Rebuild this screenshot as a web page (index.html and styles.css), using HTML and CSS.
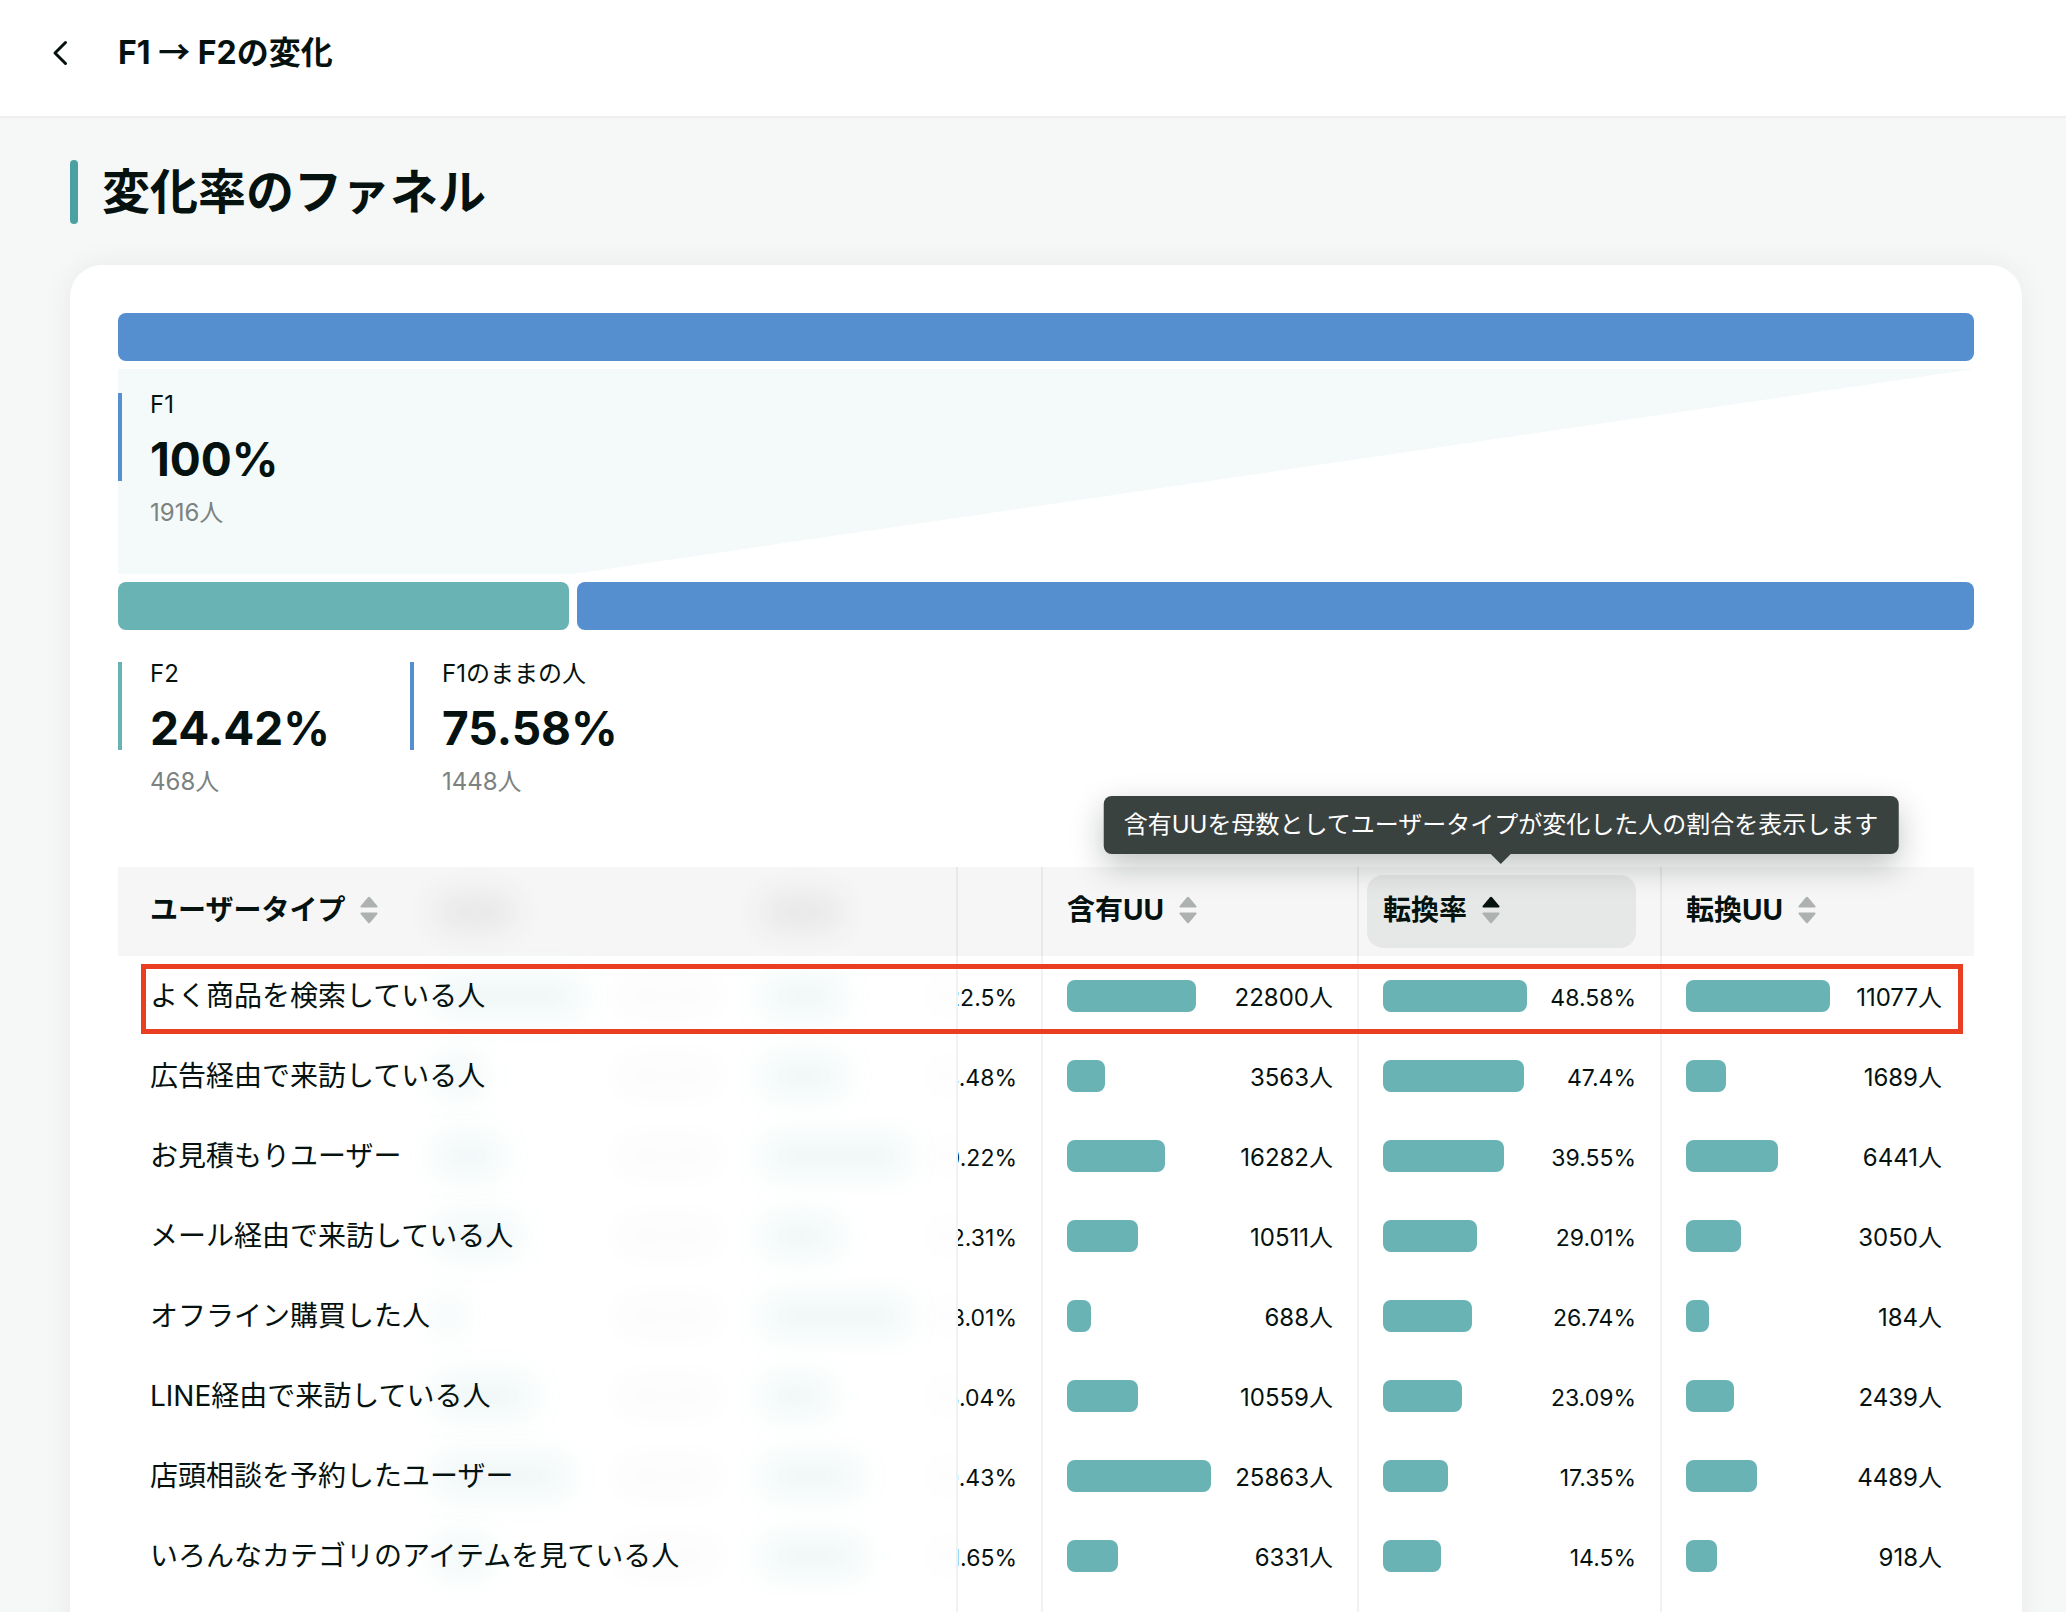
FILE: index.html
```html
<!DOCTYPE html>
<html lang="ja">
<head>
<meta charset="utf-8">
<meta name="viewport" content="width=device-width, initial-scale=1">
<title>F1 → F2の変化</title>
<link rel="stylesheet" href="styles.css">
</head>
<body>
<svg class="defs" aria-hidden="true">
  <symbol id="sort" viewBox="0 0 18 28">
    <path class="up" d="M8 1.300Q9 .1 10 1.300L17.400 9.900Q18 11.200 16.800 11.400H1.200Q0 11.200 .6 9.900Z"/>
    <path class="down" d="M8 26.700Q9 27.900 10 26.700L17.400 18.100Q18 16.800 16.800 16.600H1.200Q0 16.800 .6 18.100Z"/>
  </symbol>
</svg>

<header class="topbar">
  <button class="back" type="button" aria-label="戻る">
    <svg width="16" height="28" viewBox="0 0 16 28"><path d="M13.5 3.500 3 14l10.500 10.500" fill="none" stroke="currentColor" stroke-width="3" stroke-linecap="round" stroke-linejoin="round"/></svg>
  </button>
  <h1 class="topbar-title">F1 <span class="arrow">→</span> F2の変化</h1>
</header>

<main class="content">
  <h2 class="section-title">変化率のファネル</h2>

  <section class="card">
    <div class="bar bar-blue"></div>
    <div class="stage">
      <svg class="stage-shape" viewBox="0 0 1856 205" preserveAspectRatio="none" aria-hidden="true"><path d="M0 0H1856L455 205H0Z"/></svg>
      <div class="metric">
        <span class="marker marker-blue"></span>
        <div class="metric-body">
          <span class="metric-label">F1</span>
          <strong class="metric-value">100%</strong>
          <span class="metric-count">1916人</span>
        </div>
      </div>
    </div>
    <div class="split">
      <div class="bar bar-teal" style="flex-grow: 24.42"></div>
      <div class="bar bar-blue" style="flex-grow: 75.58"></div>
    </div>
    <div class="metrics">
      <div class="metric">
        <span class="marker marker-teal"></span>
        <div class="metric-body">
          <span class="metric-label">F2</span>
          <strong class="metric-value">24.42%</strong>
          <span class="metric-count">468人</span>
        </div>
      </div>
      <div class="metric">
        <span class="marker marker-blue"></span>
        <div class="metric-body">
          <span class="metric-label">F1のままの人</span>
          <strong class="metric-value">75.58%</strong>
          <span class="metric-count">1448人</span>
        </div>
      </div>
    </div>

    <div class="table-wrap">
      <table class="types">
        <colgroup><col class="c-name"><col class="c-veil"><col><col class="c-cut"><col class="c-uu"><col class="c-rate"><col class="c-conv"></colgroup>
        <thead>
          <tr>
            <th scope="col" class="name"><button class="sort" type="button">ユーザータイプ<svg class="sort-icon"><use href="#sort"/></svg></button></th>
            <td><i class="haze haze-head"></i></td>
            <td><i class="haze haze-head"></i></td>
            <td class="line"></td>
            <th scope="col" class="line"><button class="sort" type="button">含有UU<svg class="sort-icon"><use href="#sort"/></svg></button></th>
            <th scope="col" class="line tip-anchor"><button class="sort sort-active" type="button" aria-describedby="tip">転換率<svg class="sort-icon"><use href="#sort"/></svg></button><div class="tip" id="tip" role="tooltip">含有UUを母数としてユーザータイプが変化した人の割合を表示します</div></th>
            <th scope="col" class="line"><button class="sort" type="button">転換UU<svg class="sort-icon"><use href="#sort"/></svg></button></th>
          </tr>
        </thead>
        <tbody>
          <tr>
            <th scope="row" class="name"><span>よく商品を検索している人</span></th>
            <td><div class="veil"><i class="haze" style="width:144px"></i><i class="haze haze-text"></i></div></td>
            <td class="edge"><div class="veil"><i class="haze" style="width:77px"></i><i class="haze haze-text haze-edge"></i></div></td>
            <td class="line pct"><div class="cut">22.5%</div></td>
            <td class="line"><div class="gauge"><i style="width:129px"></i><span>22800人</span></div></td>
            <td class="line pct"><div class="gauge"><i style="width:144px"></i><span>48.58%</span></div></td>
            <td class="line last"><div class="gauge"><i style="width:144px"></i><span>11077人</span></div></td>
          </tr>
          <tr>
            <th scope="row" class="name"><span>広告経由で来訪している人</span></th>
            <td><div class="veil"><i class="haze" style="width:43px"></i><i class="haze haze-text"></i></div></td>
            <td class="edge"><div class="veil"><i class="haze" style="width:80px"></i><i class="haze haze-text haze-edge"></i></div></td>
            <td class="line pct"><div class="cut">4.48%</div></td>
            <td class="line"><div class="gauge"><i style="width:38px"></i><span>3563人</span></div></td>
            <td class="line pct"><div class="gauge"><i style="width:141px"></i><span>47.4%</span></div></td>
            <td class="line last"><div class="gauge"><i style="width:40px"></i><span>1689人</span></div></td>
          </tr>
          <tr>
            <th scope="row" class="name"><span>お見積もりユーザー</span></th>
            <td><div class="veil"><i class="haze" style="width:63px"></i><i class="haze haze-text"></i></div></td>
            <td class="edge"><div class="veil"><i class="haze" style="width:144px"></i><i class="haze haze-text haze-edge"></i></div></td>
            <td class="line pct"><div class="cut">0.22%</div></td>
            <td class="line"><div class="gauge"><i style="width:98px"></i><span>16282人</span></div></td>
            <td class="line pct"><div class="gauge"><i style="width:121px"></i><span>39.55%</span></div></td>
            <td class="line last"><div class="gauge"><i style="width:92px"></i><span>6441人</span></div></td>
          </tr>
          <tr>
            <th scope="row" class="name"><span>メール経由で来訪している人</span></th>
            <td><div class="veil"><i class="haze" style="width:80px"></i><i class="haze haze-text"></i></div></td>
            <td class="edge"><div class="veil"><i class="haze" style="width:74px"></i><i class="haze haze-text haze-edge"></i></div></td>
            <td class="line pct"><div class="cut">2.31%</div></td>
            <td class="line"><div class="gauge"><i style="width:71px"></i><span>10511人</span></div></td>
            <td class="line pct"><div class="gauge"><i style="width:94px"></i><span>29.01%</span></div></td>
            <td class="line last"><div class="gauge"><i style="width:55px"></i><span>3050人</span></div></td>
          </tr>
          <tr>
            <th scope="row" class="name"><span>オフライン購買した人</span></th>
            <td><div class="veil"><i class="haze" style="width:22px"></i><i class="haze haze-text"></i></div></td>
            <td class="edge"><div class="veil"><i class="haze" style="width:144px"></i><i class="haze haze-text haze-edge"></i></div></td>
            <td class="line pct"><div class="cut">3.01%</div></td>
            <td class="line"><div class="gauge"><i style="width:24px"></i><span>688人</span></div></td>
            <td class="line pct"><div class="gauge"><i style="width:89px"></i><span>26.74%</span></div></td>
            <td class="line last"><div class="gauge"><i style="width:23px"></i><span>184人</span></div></td>
          </tr>
          <tr>
            <th scope="row" class="name"><span>LINE経由で来訪している人</span></th>
            <td><div class="veil"><i class="haze" style="width:95px"></i><i class="haze haze-text"></i></div></td>
            <td class="edge"><div class="veil"><i class="haze" style="width:66px"></i><i class="haze haze-text haze-edge"></i></div></td>
            <td class="line pct"><div class="cut">3.04%</div></td>
            <td class="line"><div class="gauge"><i style="width:71px"></i><span>10559人</span></div></td>
            <td class="line pct"><div class="gauge"><i style="width:79px"></i><span>23.09%</span></div></td>
            <td class="line last"><div class="gauge"><i style="width:48px"></i><span>2439人</span></div></td>
          </tr>
          <tr>
            <th scope="row" class="name"><span>店頭相談を予約したユーザー</span></th>
            <td><div class="veil"><i class="haze" style="width:130px"></i><i class="haze haze-text"></i></div></td>
            <td class="edge"><div class="veil"><i class="haze" style="width:94px"></i><i class="haze haze-text haze-edge"></i></div></td>
            <td class="line pct"><div class="cut">0.43%</div></td>
            <td class="line"><div class="gauge"><i style="width:144px"></i><span>25863人</span></div></td>
            <td class="line pct"><div class="gauge"><i style="width:65px"></i><span>17.35%</span></div></td>
            <td class="line last"><div class="gauge"><i style="width:71px"></i><span>4489人</span></div></td>
          </tr>
          <tr>
            <th scope="row" class="name"><span>いろんなカテゴリのアイテムを見ている人</span></th>
            <td><div class="veil"><i class="haze" style="width:50px"></i><i class="haze haze-text"></i></div></td>
            <td class="edge"><div class="veil"><i class="haze" style="width:98px"></i><i class="haze haze-text haze-edge"></i></div></td>
            <td class="line pct"><div class="cut">1.65%</div></td>
            <td class="line"><div class="gauge"><i style="width:51px"></i><span>6331人</span></div></td>
            <td class="line pct"><div class="gauge"><i style="width:58px"></i><span>14.5%</span></div></td>
            <td class="line last"><div class="gauge"><i style="width:31px"></i><span>918人</span></div></td>
          </tr>
          <tr aria-hidden="true"><td></td><td></td><td></td><td class="line"></td><td class="line"></td><td class="line"></td><td class="line"></td></tr>
        </tbody>
      </table>
      <div class="row-highlight"></div>
    </div>
  </section>
</main>
</body>
</html>
```
FILE: styles.css
```css
:root {
  --ink: #05120f;
  --muted: #7c8280;
  --blue: #568fd0;
  --teal: #6ab3b5;
  --line: #efefef;
}

* { box-sizing: border-box; }

body {
  margin: 0;
  height: 100vh;
  display: flex;
  flex-direction: column;
  background: #f6f8f7;
  color: var(--ink);
  font-family: Inter, "Noto Sans CJK JP", sans-serif;
  font-size: 24px;
  line-height: 32px;
}

button {
  border: 0;
  background: none;
  color: inherit;
  font: inherit;
  cursor: pointer;
}

.defs { position: absolute; width: 0; height: 0; }

.topbar {
  flex: none;
  display: flex;
  align-items: center;
  gap: 38px;
  padding: 33px 40px 43px;
  background: #fff;
  border-bottom: 2px solid var(--line);
}

.back {
  display: flex;
  align-items: center;
  justify-content: center;
  width: 40px;
  height: 40px;
  padding: 0;
}

.topbar-title {
  margin: 0;
  font-size: 32px;
  line-height: 40px;
  font-weight: 700;
}

.arrow {
  font-family: "Noto Sans CJK JP", sans-serif;
  line-height: 1;
}

.content {
  flex: 1;
  min-height: 0;
  overflow: auto;
  scrollbar-width: none;
  padding: 42px 44px 0 70px;
}

.section-title {
  display: flex;
  align-items: center;
  gap: 24px;
  margin: 0 0 41px;
  font-size: 48px;
  line-height: 64px;
  font-weight: 700;
}

.section-title::before {
  content: "";
  width: 8px;
  height: 64px;
  border-radius: 4px;
  background: #4ba0a2;
}

.card {
  padding: 48px;
  border-radius: 32px;
  background: #fff;
  box-shadow: 0 0 32px rgba(5, 18, 15, .06);
}

.bar { height: 48px; border-radius: 8px; }
.bar-blue { background: var(--blue); }
.bar-teal { background: var(--teal); }

.stage {
  position: relative;
  height: 205px;
  margin: 8px 0;
  padding-top: 24px;
}

.stage-shape {
  position: absolute;
  inset: 0;
  width: 100%;
  height: 100%;
  fill: #f3faf9;
}

.split { display: flex; gap: 8px; }
.split .bar { flex-basis: 0; }

.metrics {
  display: flex;
  gap: 80px;
  margin: 32px 0 73px;
}

.metric { position: relative; display: flex; gap: 28px; }
.marker { width: 4px; height: 88px; }
.marker-blue { background: var(--blue); }
.marker-teal { background: var(--teal); }

.metric-body { display: flex; flex-direction: column; gap: 12px; }
.metric-label { line-height: 24px; }
.metric-value { font-size: 46px; line-height: 60px; font-weight: 700; }
.metric-count { line-height: 24px; color: var(--muted); }

.table-wrap { position: relative; }

.types {
  width: 100%;
  table-layout: fixed;
  border-collapse: separate;
  border-spacing: 0;
}

.c-name { width: 295px; }
.c-veil { width: 327px; }
.c-cut { width: 85px; }
.c-uu { width: 316px; }
.c-rate { width: 303px; }
.c-conv { width: 314px; }

.types th, .types td { padding: 0 24px; text-align: left; }
.types thead tr { height: 89px; background: #f6f6f6; }
.types tbody tr { height: 80px; }
.types .line { border-left: 2px solid rgba(5, 18, 15, .06); }
.types tbody .last { padding-right: 32px; }
.types tbody .edge { padding-right: 0; overflow: hidden; }
.types tbody .pct { font-size: 23px; }
.types thead th { padding-left: 8px; }
.types thead .name { padding: 0 0 0 16px; }

.types tbody .name {
  padding: 0 0 0 32px;
  font-size: 28px;
  line-height: 40px;
  font-weight: 400;
  white-space: nowrap;
}

.name span { position: relative; z-index: 1; }

.sort {
  display: flex;
  align-items: center;
  gap: 15px;
  width: 100%;
  height: 73px;
  padding: 0 16px 3px;
  border-radius: 16px;
  font-size: 28px;
  line-height: 40px;
  font-weight: 700;
  white-space: nowrap;
}

.sort-active { background: #e6e8e7; --up: var(--ink); }
.sort-icon { width: 18px; height: 28px; fill: #adb1b0; }
.up { fill: var(--up, #adb1b0); }

.gauge {
  display: flex;
  align-items: center;
  justify-content: space-between;
  white-space: nowrap;
}

.gauge i { height: 32px; border-radius: 8px; background: var(--teal); }
.gauge span, .cut { padding-top: 4px; }

.types td:has(.cut) { padding-left: 0; }

.cut {
  display: flex;
  justify-content: flex-end;
  overflow: hidden;
}

/* Obscured columns: only a soft trace of bars and values remains */
.veil { display: flex; align-items: center; justify-content: space-between; }

.haze {
  display: block;
  height: 32px;
  background: var(--teal);
  opacity: .13;
  filter: blur(17px);
}

.haze-text { width: 96px; height: 24px; background: #555; opacity: .03; }
.haze-edge { width: 20px; }
.haze-head { width: 76px; height: 28px; background: #333; opacity: .1; }

.tip-anchor { position: relative; }

.tip {
  position: absolute;
  z-index: 2;
  bottom: 102px;
  left: 142px;
  transform: translateX(-50%);
  padding: 13px 20px;
  border-radius: 8px;
  background: #3a4240;
  color: #fff;
  font-weight: 400;
  white-space: nowrap;
  box-shadow: 0 12px 32px rgba(5, 18, 15, .25);
}

.tip::after {
  content: "";
  position: absolute;
  top: 100%;
  left: 50%;
  margin-left: -10px;
  border: 10px solid transparent;
  border-top-color: #3a4240;
  border-bottom: 0;
}

.row-highlight {
  position: absolute;
  top: 97px;
  left: 23px;
  right: 11px;
  height: 70px;
  border: 5px solid #e93e22;
  pointer-events: none;
}
```
